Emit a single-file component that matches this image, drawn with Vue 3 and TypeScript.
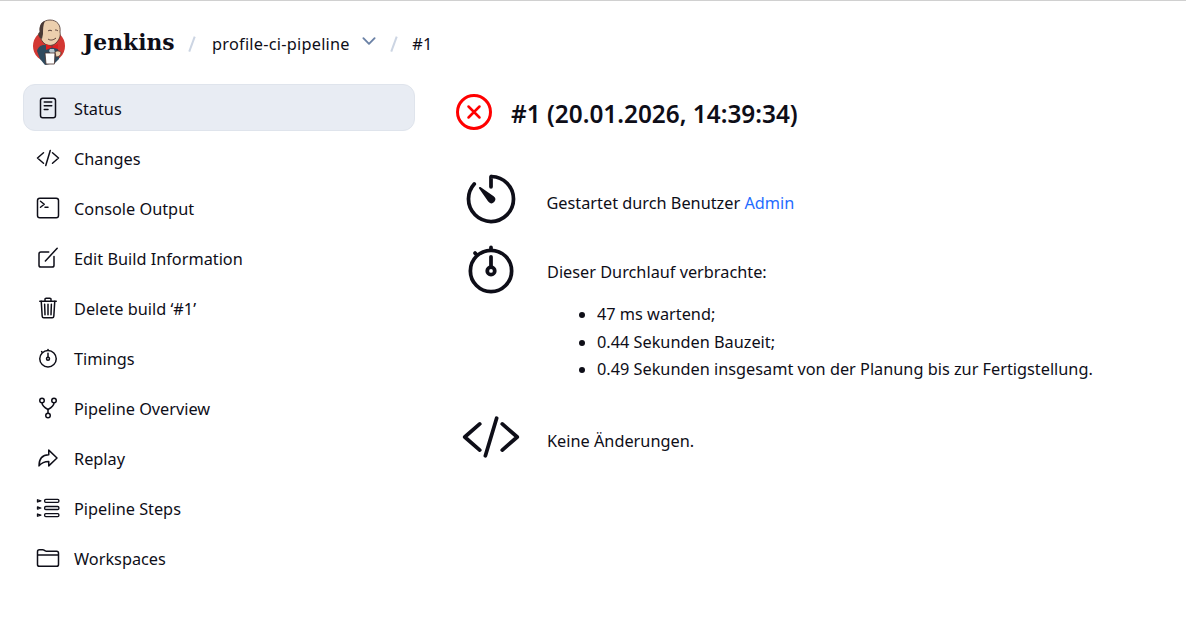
<script setup lang="ts">
interface NavItem { label: string; icon: string; active?: boolean }
const nav: NavItem[] = [
  { label: 'Status', icon: 'doc', active: true },
  { label: 'Changes', icon: 'code' },
  { label: 'Console Output', icon: 'term' },
  { label: 'Edit Build Information', icon: 'edit' },
  { label: 'Delete build ‘#1’', icon: 'trash' },
  { label: 'Timings', icon: 'watch' },
  { label: 'Pipeline Overview', icon: 'git' },
  { label: 'Replay', icon: 'redo' },
  { label: 'Pipeline Steps', icon: 'steps' },
  { label: 'Workspaces', icon: 'folder' },
]
</script>

<template>
  <div class="page">
    <svg width="0" height="0" class="defs">
      <defs>
        <symbol id="doc" viewBox="0 0 512 512">
          <rect x="96" y="48" width="320" height="416" rx="48" />
          <path d="M176 128h160M176 208h160M176 288h80" />
        </symbol>
        <symbol id="code" viewBox="0 0 512 512">
          <path d="M160 368L32 256l128-112M352 368l128-112-128-112M304 96l-96 320" />
        </symbol>
        <symbol id="term" viewBox="0 0 512 512">
          <rect x="32" y="48" width="448" height="416" rx="48" />
          <path d="M96 112l80 64-80 64M192 240h64" />
        </symbol>
        <symbol id="edit" viewBox="0 0 512 512">
          <path d="M384 224v184a40 40 0 01-40 40H104a40 40 0 01-40-40V168a40 40 0 0140-40h167.48" />
          <path d="M200 320L452 48" />
        </symbol>
        <symbol id="trash" viewBox="0 0 512 512">
          <path d="M112 112l20 320c.95 18.49 14.4 32 32 32h184c17.67 0 30.87-13.51 32-32l20-320" />
          <path d="M80 112h352" />
          <path d="M192 112V72a23.93 23.93 0 0124-24h80a23.93 23.93 0 0124 24v40M256 176v224M184 176l8 224M328 176l-8 224" />
        </symbol>
        <symbol id="watch" viewBox="0 0 512 512">
          <path d="M256 232v-80M256 88V72M132 132l-12-12" />
          <circle cx="256" cy="272" r="32" />
          <path d="M256 96c-97.05 0-176 78.95-176 176s78.95 176 176 176 176-78.95 176-176S353.05 96 256 96z" />
        </symbol>
        <symbol id="git" viewBox="0 0 512 512">
          <circle cx="128" cy="96" r="48" />
          <circle cx="256" cy="416" r="48" />
          <path d="M256 368V288" />
          <circle cx="384" cy="96" r="48" />
          <path d="M128 144c0 74.67 68.92 112 128 144 59.08-32 128-69.33 128-144" />
        </symbol>
        <symbol id="redo" viewBox="0 0 512 512">
          <path d="M448 256L272 88v96C103.57 184 64 304.77 64 424c48.61-62.24 91.6-96 208-96v96z" />
        </symbol>
        <symbol id="steps" viewBox="0 0 512 512">
          <g stroke-width="28">
            <rect x="184" y="72" width="304" height="64" rx="24" />
            <rect x="184" y="224" width="304" height="64" rx="24" />
            <rect x="184" y="376" width="304" height="64" rx="24" />
            <path d="M32 80l72 24-72 24zM32 232l72 24-72 24zM32 384l72 24-72 24z" />
          </g>
        </symbol>
        <symbol id="folder" viewBox="0 0 512 512">
          <path d="M440 432H72a40 40 0 01-40-40V120a40 40 0 0140-40h75.89a40 40 0 0122.19 6.72l27.84 18.56a40 40 0 0022.19 6.72H440a40 40 0 0140 40v240a40 40 0 01-40 40zM32 192h448" />
        </symbol>
      </defs>
    </svg>

    <header class="crumbs">
      <svg class="logo" width="36" height="48" viewBox="0 0 36 48" aria-hidden="true">
        <circle cx="19" cy="27" r="16" fill="#d33833" />
        <path d="M7 32 C8 28 11 26 14 26 L26 27 C29 31 30 36 29 40 L25 44 L15 46 L10 40 Z" fill="#2f4a5e" />
        <path d="M10 13 C9 5 14 1 20 1 C27 1 31 6 30 13 C31 17 29 21 26 24 C23 27 18 27 15 25 C12 23 11 20 10 18 C8 17 8 14 10 13 Z" fill="#eccfae" stroke="#49312c" stroke-width=".8" />
        <path d="M10 13 C9 7 11 3 15 2 C13 6 13 10 13 15 L12 20 C8 18 8 14 10 13 Z" fill="#4a3a36" />
        <path d="M18 12c1-1 3-1 4 0M25 11c1 0 2 0 3 1M18 20c2 1.500 5 1.500 8-1" fill="none" stroke="#49312c" stroke-width=".9" />
        <path d="M16 25 L22 27.500 L28 25 L28 30 L22 28.500 L16 31 Z" fill="#e02020" />
        <path d="M20 30l4 0 1 4-4 1-2-3z" fill="#b8c4cc" />
        <path d="M15 34h10l-.6 11H16z" fill="#fff" stroke="#49312c" stroke-width=".8" />
        <path d="M25 33c2-2 6-1 6 1s-2 4-5 4z" fill="#eccfae" stroke="#49312c" stroke-width=".8" />
      </svg>
      <span class="brand">Jenkins</span>
      <span class="sep sep-first" />
      <span class="crumb">profile-ci-pipeline</span>
      <svg class="chev" width="20" height="20" viewBox="0 0 512 512" aria-hidden="true">
        <path d="M112 184l144 144 144-144" />
      </svg>
      <span class="sep" />
      <span class="crumb">#1</span>
    </header>

    <div class="layout">
      <nav class="side">
        <a v-for="item in nav" :key="item.label" class="item" :class="{ active: item.active }">
          <svg class="ic" width="24" height="24"><use :href="'#' + item.icon" /></svg>
          <span>{{ item.label }}</span>
        </a>
      </nav>

      <main class="main">
        <div class="title">
          <svg class="status" width="36" height="36" viewBox="0 0 36 36" aria-hidden="true">
            <circle cx="18" cy="18" r="16.500" />
            <path d="M12.500 12.500l11 11M23.500 12.500l-11 11" />
          </svg>
          <h1>#1 (20.01.2026, 14:39:34)</h1>
        </div>

        <div class="row first">
          <svg class="big" width="60" height="60" viewBox="0 0 512 512" aria-hidden="true">
            <path d="M112.91 128A191.85 191.85 0 0064 254c-1.18 106.35 85.65 193.8 192 194 106.2.2 192-85.83 192-192 0-104.54-83.55-189.61-187.5-192a4.36 4.36 0 00-4.5 4.37V152" />
            <path class="solid" d="M233.38 278.63l-79-113a8.13 8.13 0 0111.32-11.32l113 79a32.5 32.5 0 01-37.25 53.26 33.21 33.21 0 01-8.07-8.94z" />
          </svg>
          <p>Gestartet durch Benutzer <a class="link">Admin</a></p>
        </div>

        <div class="row second">
          <svg class="big" width="60" height="60" aria-hidden="true"><use href="#watch" /></svg>
          <div>
            <p>Dieser Durchlauf verbrachte:</p>
            <ul>
              <li>47 ms wartend;</li>
              <li>0.44 Sekunden Bauzeit;</li>
              <li>0.49 Sekunden insgesamt von der Planung bis zur Fertigstellung.</li>
            </ul>
          </div>
        </div>

        <div class="row third">
          <svg class="big" width="60" height="60" aria-hidden="true"><use href="#code" /></svg>
          <p>Keine Änderungen.</p>
        </div>
      </main>
    </div>
  </div>
</template>

<style>
html, body { background: #fff; }
</style>

<style scoped>
.page {
  min-height: 617px;
  box-sizing: border-box;
  border-top: 1px solid #d0d0d0;
  color: #0e0e18;
  font-family: "Noto Sans", "Open Sans", sans-serif;
  font-size: 16.300px;
  line-height: 24px;
}
.defs { position: absolute; }
.crumbs {
  height: 83px;
  box-sizing: border-box;
  padding: 18px 0 0 30px;
  display: flex;
  align-items: flex-start;
}
.logo { flex: none; }
.brand {
  margin: 11px 0 0 17px;
  font-family: "DejaVu Serif", serif;
  font-weight: 700;
  font-size: 21.800px;
  line-height: 26px;
}
.sep {
  width: 1.500px;
  height: 16px;
  margin: 17px 18px 0 14px;
  background: #ccd5e3;
  transform: rotate(20deg);
}
.sep-first { margin-left: 16px; margin-right: 20px; }
.crumb { margin-top: 13px; letter-spacing: .25px; }
.chev { margin: 12px 0 0 9px; fill: none; stroke: #6b82a6; stroke-width: 48; stroke-linecap: round; stroke-linejoin: round; }
.layout { display: flex; align-items: flex-start; padding-left: 23px; }
.side { width: 392px; flex: none; display: flex; flex-direction: column; gap: 3px; }
.item {
  height: 47px;
  box-sizing: border-box;
  padding: 0 12px;
  display: flex;
  align-items: center;
  gap: 14px;
  border: 1px solid transparent;
  border-radius: 12px;
}
.item span { padding-top: 3px; }
.item.active { background: #e8ecf3; border-color: #dfe4ec; }
.ic { flex: none; fill: none; stroke: #0e0e18; stroke-width: 32; stroke-linecap: round; stroke-linejoin: round; }
.main { margin-left: 41px; flex: 1; }
.title { display: flex; align-items: center; gap: 19px; height: 56px; }
.status { flex: none; fill: none; stroke: #f00; stroke-width: 3; stroke-linecap: round; }
.status path { stroke-width: 2.500; }
h1 { margin: 0; padding-top: 4px; font-size: 24.350px; line-height: 32px; font-weight: 600; }
.row { display: flex; align-items: flex-start; gap: 26px; padding-left: 5px; }
.first { gap: 25.500px; }
.big { flex: none; fill: none; stroke: #0e0e18; stroke-width: 32; stroke-linecap: round; stroke-linejoin: round; }
.big .solid { fill: #0e0e18; stroke: none; }
p { margin: 0; padding-top: 22px; }
.first { margin-top: 29px; }
.second { margin-top: 10px; }
.second p { padding-top: 21px; }
.third { margin-top: 23px; }
.third p { padding-top: 22px; }
ul { margin: 17px 0 0; padding-left: 50px; }
li { line-height: 27.500px; }
.link { color: #1f6cff; }
</style>
